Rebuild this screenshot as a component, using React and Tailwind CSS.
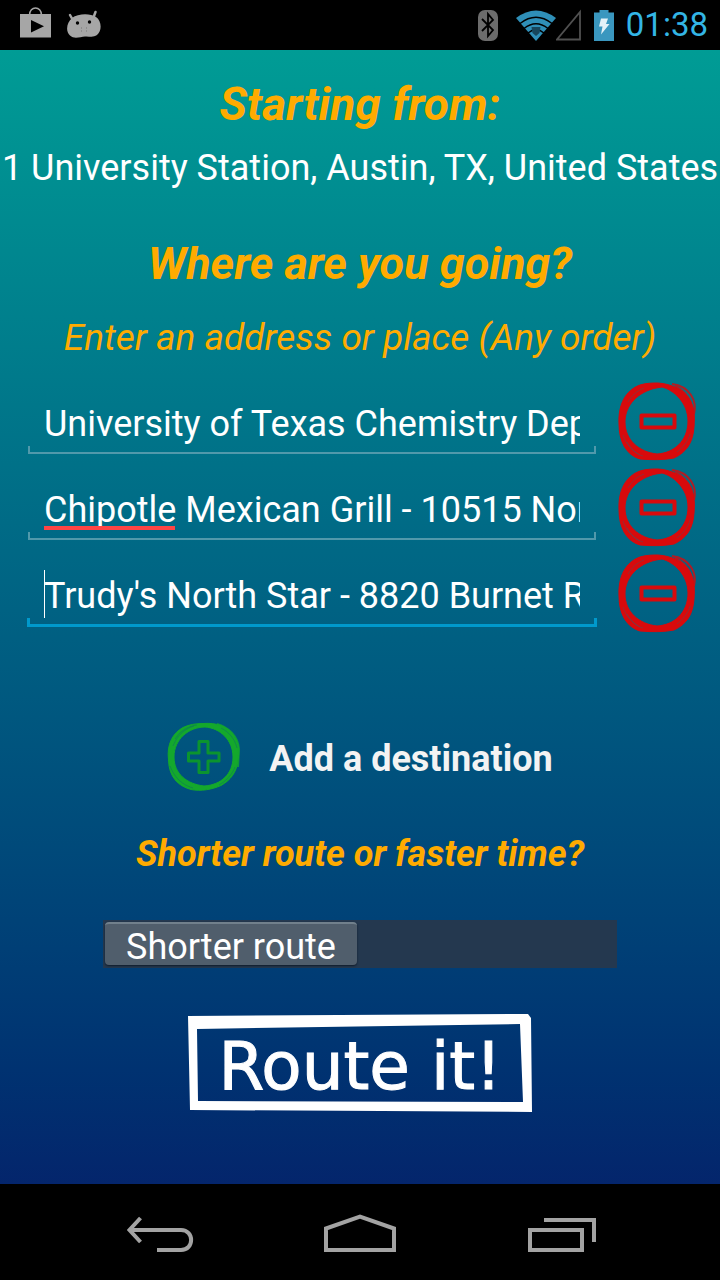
import { useState } from "react";

function StatusBar() {
  return (
    <header className="flex h-[50px] items-center justify-between bg-black pr-3 pl-5">
      <div className="flex items-center gap-[15px] pb-1">
        <svg className="h-8 w-8" viewBox="0 0 32 32" aria-label="Play Store">
          <path d="M9.500 8C9.500 -1.500 21.500 -1.500 21.500 8" fill="none" stroke="#a6a6a6" strokeWidth="1.500" />
          <path fillRule="evenodd" fill="#a6a6a6" d="M0 7h31v23.500H0zM11 13v12.500l13-6.300z" />
        </svg>
        <svg className="h-8 w-9" viewBox="0 0 36 32" aria-label="Android">
          <path d="M3 8l4 7M28.500 5l-3 8" fill="none" stroke="#a6a6a6" strokeWidth="2.500" strokeLinecap="round" />
          <path fill="#a6a6a6" d="M5 11C11 6.500 23 6 29 10c6 4 6 14 1 18-4 3-8 1-12 1.500-5 .5-11 3-15-1-5-5-3-13 2-17.500z" />
          <circle cx="10.500" cy="16" r="1.700" />
          <circle cx="22.500" cy="15" r="1.700" />
          <path d="M14 21h1m4 0h1m-6 3h1m4 0h1" stroke="#777" strokeWidth="1" />
        </svg>
      </div>
      <div className="flex items-center">
        <svg className="h-8 w-5" viewBox="0 0 20 32" aria-label="Bluetooth">
          <rect width="20" height="31" y="1" rx="7" fill="#6c6c6c" />
          <path d="M4 10l11 11-5 6V5l5 6L4 22" fill="none" stroke="#000" strokeWidth="1.800" />
        </svg>
        <svg className="ml-[18px] h-8 w-10" viewBox="0 0 40 32" aria-label="Wi-Fi">
          <path d="M0 9Q20-6 40 9L20 32z" fill="#2f8fb8" />
          <path d="M4 14.500Q20 2 36 14.500M8 19.500Q20 10 32 19.500M12 24Q20 17.500 28 24" fill="none" stroke="#000" strokeWidth="1.500" />
          <path d="M15.500 18h9l-1 6-3.500 3-3.500-3z" fill="#17465c" />
        </svg>
        <svg className="h-8 w-[26px]" viewBox="2 0 26 32" aria-label="No signal">
          <path d="M26 3v27.500H3z" fill="none" stroke="#505050" strokeWidth="1.800" />
        </svg>
        <svg className="ml-3 h-8 w-5" viewBox="0 0 20 32" aria-label="Battery charging">
          <path d="M0 3.500h5.500V1h9v2.500H20V32H0z" fill="#3a97bf" />
          <path d="M7 9.500h7l-2 5.500h3.500L7 25.500l1.500-8H5z" fill="#e4f2f8" />
        </svg>
        <span className="ml-3 text-[33px] leading-[50px] text-[#33b5e5]">01:38</span>
      </div>
    </header>
  );
}

function RemoveIcon() {
  return (
    <svg className="h-20 w-20" viewBox="0 0 80 80" aria-hidden="true" fill="none" stroke="#d80a0c" strokeLinejoin="round">
      <path
        fill="#d80a0c"
        stroke="#d80a0c"
        strokeWidth="1"
        fillRule="evenodd"
        d="M40 2C54 3 66 9 72 19c4 7 5 14 4 27-1 15-7 25-20 31-10 2-22 2-34 1C8 74 1 60 1 43 0 23 8 9 22 4c6-2 13-2 18-2zM38 7C20 11 7 24 7 41c0 18 14 30 32 32 17-1 31-13 31-33C70 22 56 9 44 6z"
      />
      <path strokeWidth="2" strokeOpacity="0.8" d="M54 3c9 1 15 5 19 11 4 6 5 11 3 19M57 5c8 4 13 9 16 17" />
      <path stroke="#06778a" strokeOpacity="0.3" strokeWidth="1" d="M5 54c3 9 9 16 17 20M9 61c4 7 9 12 16 14M10 21c4-7 9-11 16-14M72 53c-2 8-8 14-13 18" />
      <rect x="23.500" y="34.500" width="33" height="12" strokeWidth="4" />
    </svg>
  );
}

function AddIcon() {
  return (
    <svg className="h-[70px] w-[74px]" viewBox="0 0 74 70" aria-hidden="true" fill="none" stroke="#14a82c" strokeLinejoin="round">
      <path
        fill="#14a82c"
        stroke="#14a82c"
        strokeWidth="1"
        fillRule="evenodd"
        d="M36 1.500c14-1 24 3 30 11 5 7 7 14 5 25-1 13-8 21-17 26-9 4-20 6-30 4C11 64 2 55 1.500 38-.5 22 6 11 16 5.500c6-3 13-4 20-4zM38 5C22 5 7 17 7 35c0 17 13 27 30 29 17-1 29-12 29-29C66 18 53 6 38 5z"
      />
      <path strokeWidth="2" strokeOpacity="0.8" d="M50 2c11 3 21 12 22 25M72 27l-1 18" />
      <path stroke="#05577f" strokeOpacity="0.35" strokeWidth="1" d="M8 17C13 9 21 4 30 3M6 24C10 14 17 7 27 4M3 44c4 11 12 19 23 22M54 6c8 4 14 11 16 20M68 45c-3 8-9 14-16 18" />
      <path strokeWidth="3" stroke="#0b942e" d="M32 19.500h9v11.500h11v8H41v11.500h-9V39H21.500v-8H32z" />
    </svg>
  );
}

function DestinationRow({ id, value, onChange, onRemove, active, misspelled }) {
  return (
    <li className="flex h-[86px] items-center">
      <div className="flex min-w-0 flex-1 flex-col pt-[10px]">
        <div className="relative px-4">
          <label htmlFor={id} className="sr-only">Destination</label>
          <input
            id={id}
            value={value}
            onChange={onChange}
            spellCheck={false}
            className="block h-12 w-full bg-transparent pt-1 text-[36px] leading-[44px] text-white outline-none"
          />
          {misspelled && (
            <span aria-hidden="true" className="pointer-events-none absolute bottom-0.5 left-4 h-1 w-[131px] bg-[#ff4444]" />
          )}
          {active && <span aria-hidden="true" className="absolute top-0 left-4 h-12 w-px bg-white" />}
        </div>
        {active ? (
          <div className="-mx-px h-[9px] border-x-[3px] border-b-[3px] border-[#0099cc]" />
        ) : (
          <div className="h-2 border-x-2 border-b-2 border-[#5199ab]" />
        )}
      </div>
      <button type="button" aria-label="Remove destination" onClick={onRemove} className="ml-[22px]">
        <RemoveIcon />
      </button>
    </li>
  );
}

function NavBar() {
  return (
    <nav className="flex h-24 items-center justify-center gap-[126px] bg-black pt-1">
      <button type="button" aria-label="Back">
        <svg className="h-10 w-[76px]" viewBox="0 0 76 40" fill="none" stroke="#a3a3a3" strokeWidth="4">
          <path d="M20.500 4L9.500 16l11 12M10 16h51c13.500 0 13.500 20 0 20H37" />
        </svg>
      </button>
      <button type="button" aria-label="Home">
        <svg className="h-10 w-[76px]" viewBox="0 0 76 40" fill="none" stroke="#a3a3a3" strokeWidth="4">
          <path d="M4 36V14.500L38 2.500l34 12V36z" />
        </svg>
      </button>
      <button type="button" aria-label="Recent apps">
        <svg className="h-10 w-[76px]" viewBox="0 0 76 40" fill="none" stroke="#a3a3a3" strokeWidth="4">
          <path d="M6 16h52v20H6zM20 6h50v22" />
        </svg>
      </button>
    </nav>
  );
}

const initialStops = [
  { id: "stop-1", value: "University of Texas Chemistry Department" },
  { id: "stop-2", value: "Chipotle Mexican Grill - 10515 North Mopac", misspelled: true },
  { id: "stop-3", value: "Trudy's North Star - 8820 Burnet Road", active: true },
];

export default function App() {
  const [stops, setStops] = useState(initialStops);
  const [shorter, setShorter] = useState(true);

  return (
    <div className="flex min-h-screen flex-col overflow-x-hidden bg-black font-['Roboto',sans-serif]">
      <StatusBar />
      <main className="flex flex-1 flex-col items-center bg-linear-to-b from-[#009c95] to-[#04256c]">
        <h1 className="mt-6 text-[46px] leading-[60px] font-bold text-[#ffab00] italic">Starting from:</h1>
        <p className="mt-2 text-[36px] leading-[52px] whitespace-nowrap text-white">1 University Station, Austin, TX, United States</p>
        <h2 className="mt-10 text-[45px] leading-[60px] font-bold text-[#ffab00] italic">Where are you going?</h2>
        <p className="mt-5 text-[37px] leading-[48px] text-[#ffab00] italic">Enter an address or place (Any order)</p>

        <ul className="mt-4 w-full pr-[22px] pl-7">
          {stops.map((stop) => (
            <DestinationRow
              key={stop.id}
              {...stop}
              onChange={(e) =>
                setStops(stops.map((s) => (s.id === stop.id ? { ...s, value: e.target.value, misspelled: false } : s)))
              }
              onRemove={() => setStops(stops.filter((s) => s.id !== stop.id))}
            />
          ))}
        </ul>

        <button
          type="button"
          onClick={() => setStops([...stops, { id: `stop-${Date.now()}`, value: "" }])}
          className="mt-[86px] flex items-center gap-7 text-[36px] leading-[48px] font-bold text-[#f3f3f3]"
        >
          <AddIcon />
          <span className="pt-1">Add a destination</span>
        </button>

        <h3 className="mt-[38px] text-[36px] leading-[48px] font-bold text-[#ffab00] italic">Shorter route or faster time?</h3>

        <button
          type="button"
          role="switch"
          aria-checked={!shorter}
          onClick={() => setShorter(!shorter)}
          className={`mt-[42px] flex h-12 w-[514px] border-2 border-[#24384f] bg-[#24384f] ${shorter ? "justify-start" : "justify-end"}`}
        >
          <span className="h-[43px] w-[252px] rounded-sm border-t-2 border-[#71808c] bg-[#505e6c] text-[36px] leading-[46px] text-white shadow-[0_1px_2px_#101c2a]">
            {shorter ? "Shorter route" : "Faster time"}
          </span>
        </button>

        <button type="button" className="relative mt-[46px] mb-[72px] flex h-[98px] w-[344px] items-center justify-center pt-2">
          <svg className="absolute inset-0 h-full w-full" viewBox="0 0 344 98" aria-hidden="true">
            <path fill="#fff" fillRule="evenodd" d="M0 2L340 0l3 4 1 94L2 96zM9 15l1 72 325 1-3-78z" />
          </svg>
          <span className="relative font-['DejaVu_Sans',sans-serif] text-[66px] leading-[80px] text-white [-webkit-text-stroke:1px_white]">Route it!</span>
        </button>
      </main>
      <NavBar />
    </div>
  );
}
